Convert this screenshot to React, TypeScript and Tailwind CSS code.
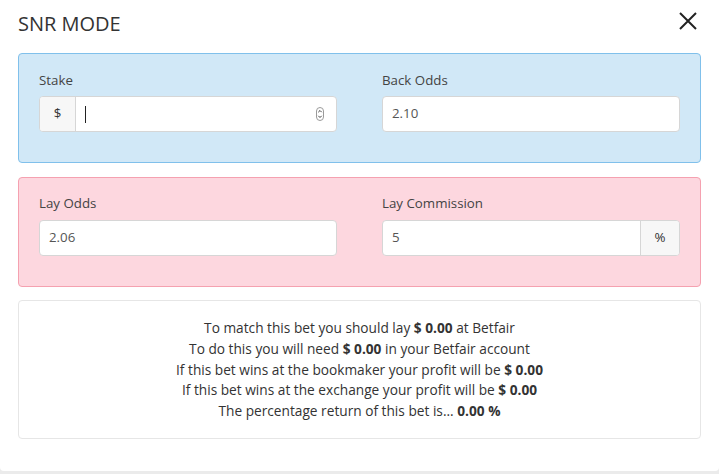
import React from "react";

function Spinner() {
  return (
    <svg width="8" height="14" viewBox="0 0 8 14" className="shrink-0">
      <rect x="0.5" y="0.5" width="7" height="13" rx="3.5" fill="#fff" stroke="#9a9a9a" />
      <path d="M2.3 5.2 L4 3.5 L5.7 5.2" fill="none" stroke="#444" strokeWidth="1" />
      <path d="M2.3 8.8 L4 10.5 L5.7 8.8" fill="none" stroke="#444" strokeWidth="1" />
    </svg>
  );
}

export default function App() {
  return (
    <div
      className="w-[719px] h-[474px] bg-[#ebebeb] text-[#333]"
      style={{ fontFamily: '"Open Sans", "Liberation Sans", sans-serif' }}
    >
      <div className="h-[471px] bg-white rounded-b-[4px] px-[18px] pt-[10px] flex flex-col">
        <div className="flex items-center justify-between h-[28px]">
          <div className="text-[20px] leading-[28px] text-[#333]">SNR MODE</div>
          <svg width="20" height="20" viewBox="0 0 20 20" className="mr-[3px] mt-[-6px]">
            <path d="M2 2 L18 18 M18 2 L2 18" stroke="#222" strokeWidth="2" />
          </svg>
        </div>

        <div className="mt-[15px] h-[110px] rounded-[4px] border border-[#80c0eb] bg-[#d1e8f7] px-[20px] pt-[18px] grid grid-cols-2 gap-x-[45px]">
          <div className="flex flex-col">
            <label className="text-[13.3px] leading-[16px] text-[#444]">Stake</label>
            <div className="mt-[8px] h-[36px] flex rounded-[4px] border border-[#d6d6d6] bg-white overflow-hidden">
              <div className="w-[36px] bg-[#f7f7f7] border-r border-[#d6d6d6] flex items-center justify-center text-[13.3px] text-[#333]">
                $
              </div>
              <div className="flex-1 flex items-center pl-[9px] pr-[12px]">
                <div className="w-px h-[17px] bg-[#222]" />
                <div className="flex-1" />
                <Spinner />
              </div>
            </div>
          </div>
          <div className="flex flex-col">
            <label className="text-[13.3px] leading-[16px] text-[#444]">Back Odds</label>
            <div className="mt-[8px] h-[36px] flex items-center rounded-[4px] border border-[#d6d6d6] bg-white px-[9px] text-[13.3px] text-[#555]">
              2.10
            </div>
          </div>
        </div>

        <div className="mt-[14px] h-[110px] rounded-[4px] border border-[#f5a1b0] bg-[#fdd7df] px-[20px] pt-[17px] grid grid-cols-2 gap-x-[45px]">
          <div className="flex flex-col">
            <label className="text-[13.3px] leading-[16px] text-[#444]">Lay Odds</label>
            <div className="mt-[9px] h-[36px] flex items-center rounded-[4px] border border-[#d6d6d6] bg-white px-[9px] text-[13.3px] text-[#555]">
              2.06
            </div>
          </div>
          <div className="flex flex-col">
            <label className="text-[13.3px] leading-[16px] text-[#444]">Lay Commission</label>
            <div className="mt-[9px] h-[36px] flex rounded-[4px] border border-[#d6d6d6] bg-white overflow-hidden">
              <div className="flex-1 flex items-center px-[9px] text-[13.3px] text-[#555]">5</div>
              <div className="w-[39px] bg-[#f7f7f7] border-l border-[#d6d6d6] flex items-center justify-center text-[13.3px] text-[#333]">
                %
              </div>
            </div>
          </div>
        </div>

        <div className="mt-[13px] h-[139px] rounded-[4px] border border-[#e6e6e6] bg-white pt-[17px] text-center text-[13.7px] leading-[20.8px] text-[#333]">
          <div>
            To match this bet you should lay <b className="font-bold">$ 0.00</b> at Betfair
          </div>
          <div>
            To do this you will need <b className="font-bold">$ 0.00</b> in your Betfair account
          </div>
          <div>
            If this bet wins at the bookmaker your profit will be <b className="font-bold">$ 0.00</b>
          </div>
          <div>
            If this bet wins at the exchange your profit will be <b className="font-bold">$ 0.00</b>
          </div>
          <div>
            The percentage return of this bet is... <b className="font-bold">0.00 %</b>
          </div>
        </div>
      </div>
    </div>
  );
}
